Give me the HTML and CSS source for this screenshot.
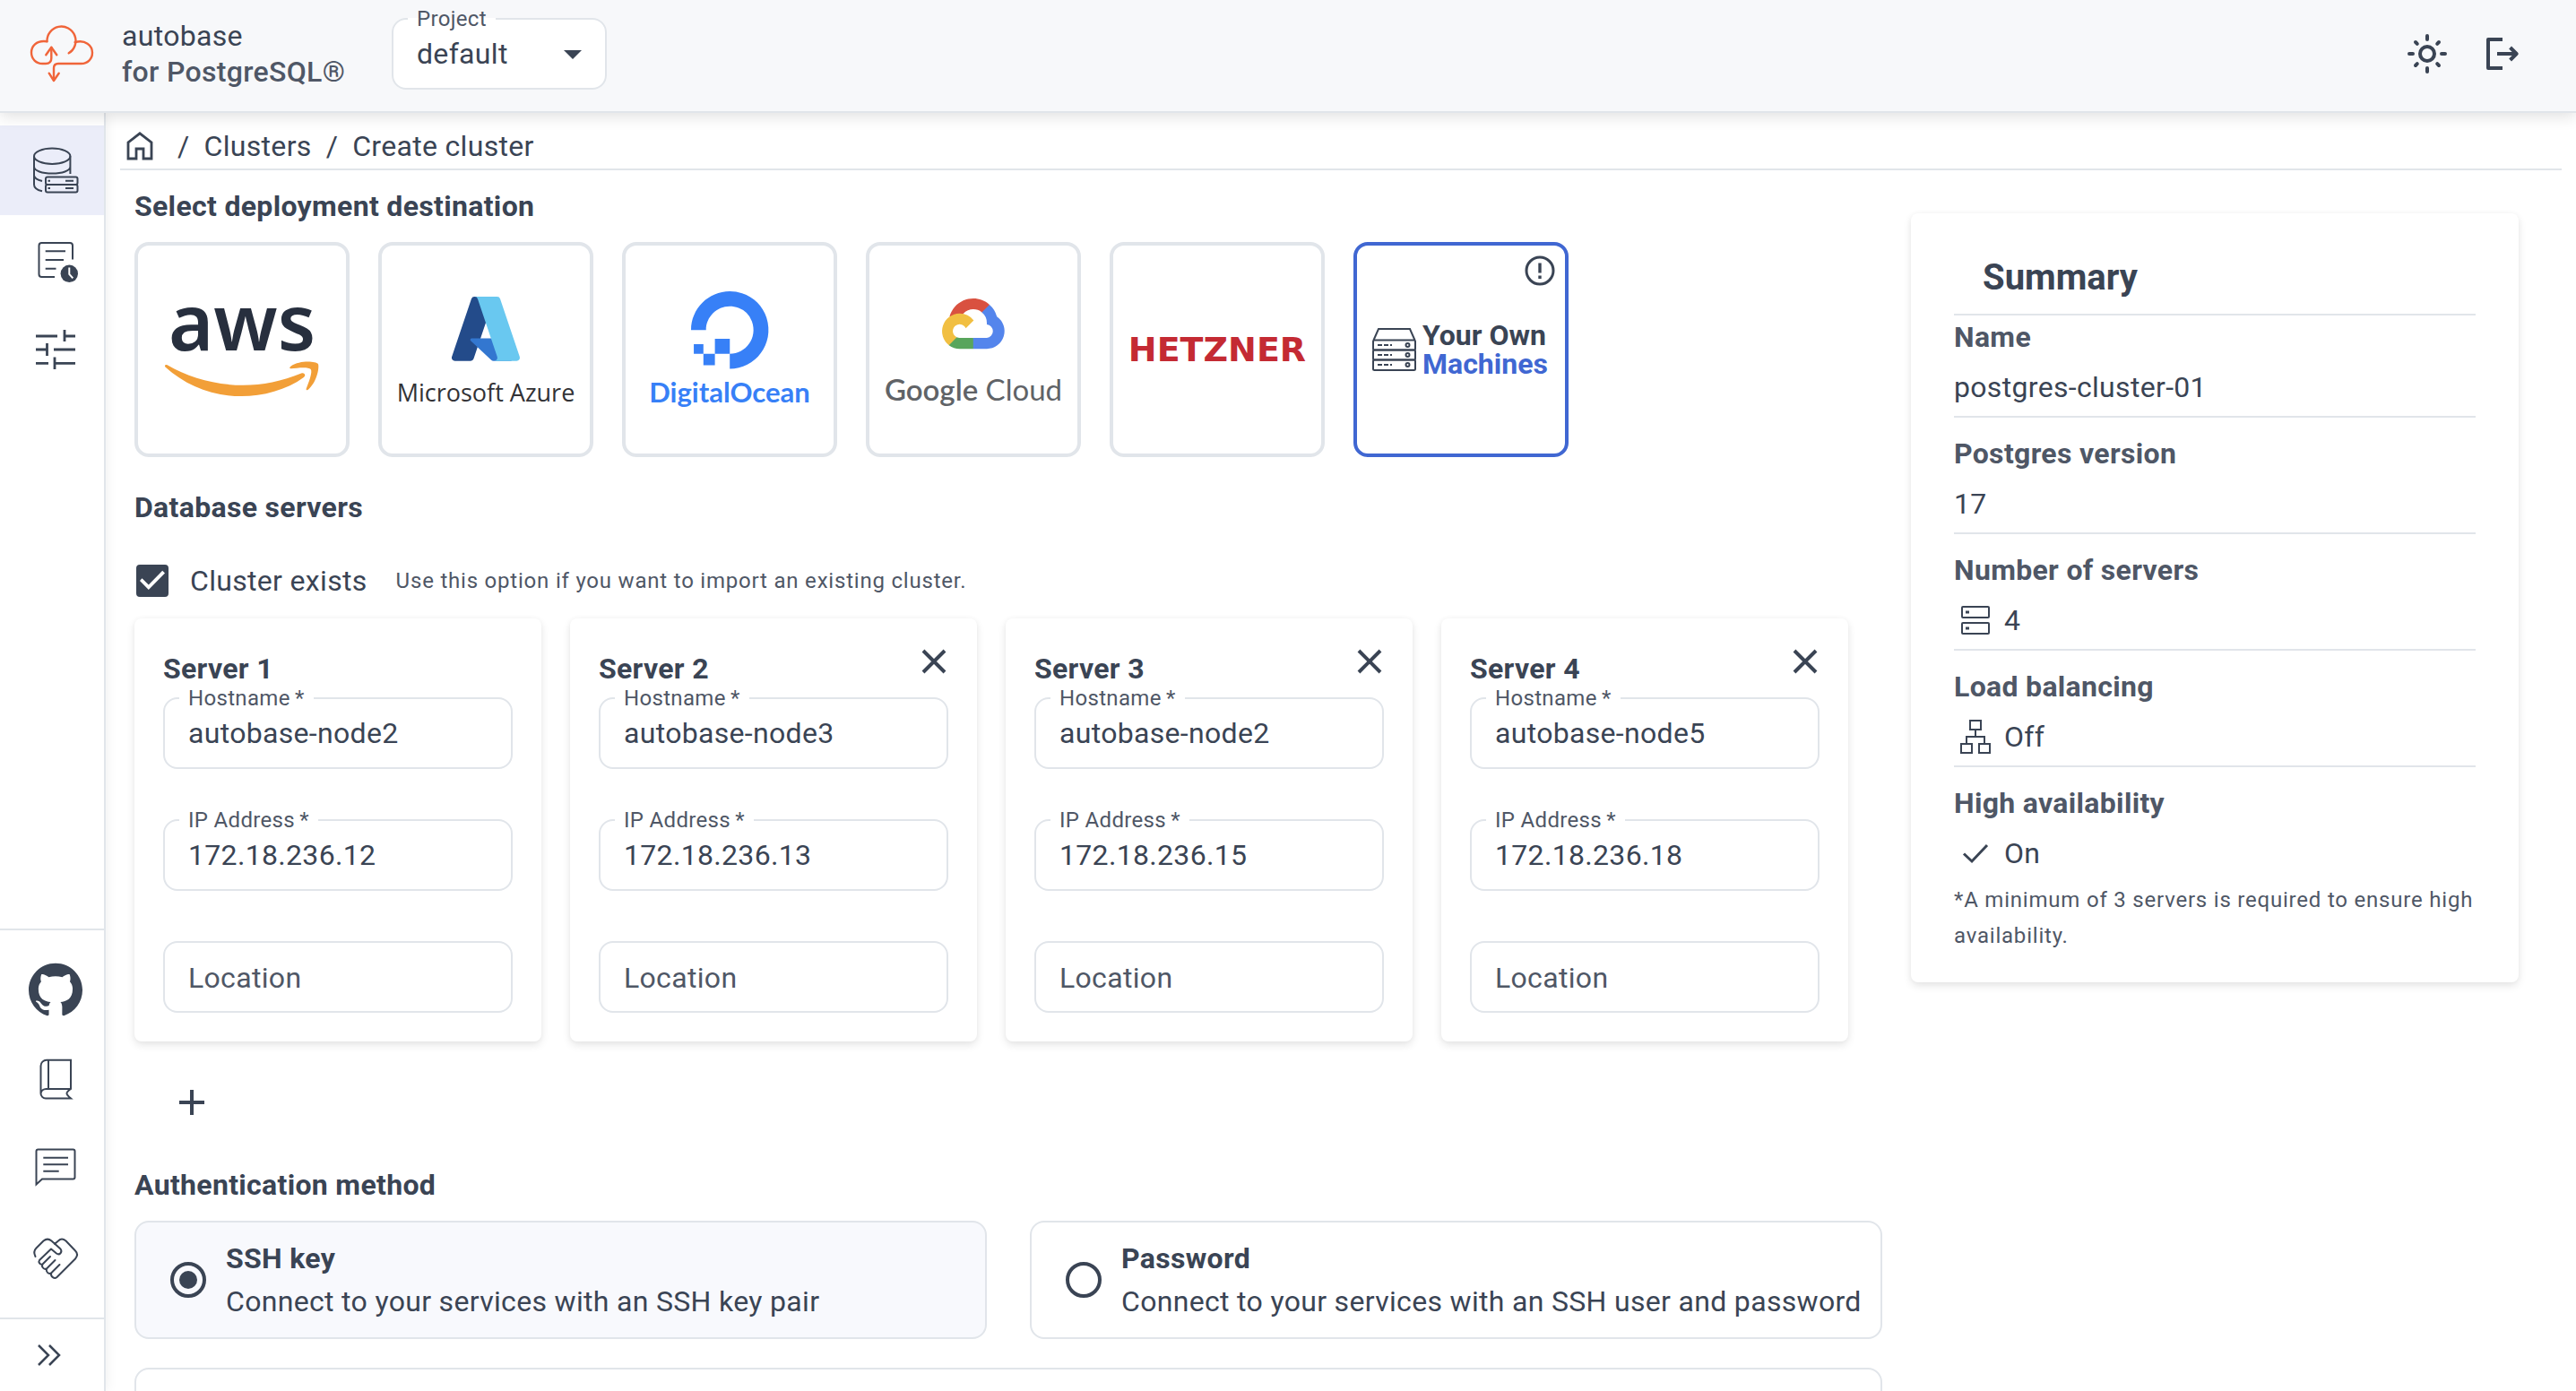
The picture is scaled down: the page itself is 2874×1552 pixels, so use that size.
FILE: index.html
```html
<!DOCTYPE html>
<html lang="en">
<head>
<meta charset="utf-8">
<meta name="viewport" content="width=device-width, initial-scale=1">
<title>Create cluster - autobase for PostgreSQL</title>
<link rel="stylesheet" href="styles.css">
</head>
<body>
<svg class="sprite" aria-hidden="true">
  <symbol id="icon-close" viewBox="0 0 28 28"><path d="M2 2l24 24M26 2L2 26" fill="none" stroke="currentColor" stroke-width="4"/></symbol>
</svg>

<header class="topbar">
  <a class="brand" href="#">
    <svg class="brand-mark" viewBox="0 0 80 72" fill="none" stroke="#f0653a" stroke-width="2.4" stroke-linecap="round" stroke-linejoin="round" aria-hidden="true">
      <path d="M22.5 22.2A16 16 0 1 1 46.7 35.3"/>
      <path d="M22.3 22.2C10 20.500 5 28 5 34.500C5 42 10.500 47 17.300 47H21C25 47 27.300 45 27.300 41V29"/>
      <path d="M21.300 37.300L27.300 28.700L33.300 37.300"/>
      <path d="M53.600 23.200C65 19.500 73 27 73 34.700C73 42 67.500 47 60.700 47H35C32 47 30 49 30 52V65.500"/>
      <path d="M24.700 57.700L30 66L35.700 57.700"/>
    </svg>
    <span class="brand-text"><span class="brand-name">autobase</span><span class="brand-sub">for PostgreSQL®</span></span>
  </a>
  <fieldset class="outlined project">
    <legend><label for="project">Project</label></legend>
    <select id="project" class="control"><option>default</option></select>
    <svg class="caret" viewBox="0 0 20 10" aria-hidden="true"><path d="M0 0h20L10 10z" fill="currentColor"/></svg>
  </fieldset>
  <div class="top-actions">
    <button class="icon-button" type="button" aria-label="Switch theme">
      <svg viewBox="0 0 24 24" fill="none" stroke="currentColor" stroke-width="2" stroke-linecap="round"><circle cx="12" cy="12" r="4"/><path d="M12 2v2M12 20v2M2 12h2M20 12h2M5.500 5.500l.9.9M17.600 17.600l.9.9M18.500 5.500l-.9.9M6.400 17.600l-.9.9"/></svg>
    </button>
    <button class="icon-button" type="button" aria-label="Log out">
      <svg viewBox="0 0 24 24" fill="none" stroke="currentColor" stroke-width="2" stroke-linejoin="round"><path d="M12 4H4v16h8M9 12h11M16.300 8.500L19.800 12l-3.500 3.500"/></svg>
    </button>
  </div>
</header>

<div class="shell">
  <nav class="sidebar" aria-label="Main">
    <div class="side-group side-main">
      <a class="side-item active" href="#" aria-label="Clusters">
        <svg viewBox="0 0 60 60" fill="none" stroke="currentColor" stroke-width="2"><ellipse cx="26.200" cy="14.300" rx="20.200" ry="8.700"/><path d="M6 14.300V46c0 3.500 3.500 6 9 7.300M46.400 14.300V34M6 26c0 4.500 9 7.500 20.200 7.500S46.400 30.500 46.400 26M6 36c.5 3 4 4.800 9 6"/><rect x="19" y="37.500" width="35.500" height="8.500" rx="2"/><rect x="19" y="46" width="35.500" height="8.500" rx="2"/><path d="M41 41.700h9M41 50h9M21.500 41.700h2.500M21.500 50h2.500"/></svg>
      </a>
      <a class="side-item" href="#" aria-label="Operations">
        <svg viewBox="0 0 60 60" fill="none" stroke="currentColor" stroke-width="2"><path d="M49 29.500V14a3 3 0 0 0-3-3H14.500a3 3 0 0 0-3 3v32a3 3 0 0 0 3 3H29M18.700 20.300H41M18.700 30H39M18.700 39.800H30.500"/><circle cx="45.300" cy="45.300" r="9.700" fill="currentColor" stroke="none"/><path d="M45.300 38.500v7.300l4 4.500" stroke="#fff"/></svg>
      </a>
      <a class="side-item" href="#" aria-label="Settings">
        <svg viewBox="0 0 60 60" fill="none" stroke="currentColor" stroke-width="2.800"><path d="M8 15h24M40 8v13M40 15h12M8 30h12M20.500 23v14M28 30h24M8 45.300h14M29 38.500v13.500M29 45.300h23"/></svg>
      </a>
    </div>
    <div class="side-group side-links">
      <a class="side-item" href="#" aria-label="GitHub">
        <svg viewBox="0 0 24 24" fill="currentColor"><path d="M12 .3c-6.630 0-12 5.370-12 12 0 5.300 3.438 9.800 8.205 11.385.6.113.82-.258.82-.577 0-.285-.01-1.040-.015-2.040-3.338.724-4.042-1.610-4.042-1.610C4.422 18.070 3.633 17.700 3.633 17.700c-1.087-.744.084-.729.084-.729 1.205.084 1.838 1.236 1.838 1.236 1.070 1.835 2.809 1.305 3.495.998.108-.776.417-1.305.76-1.605-2.665-.3-5.466-1.332-5.466-5.930 0-1.310.465-2.380 1.235-3.220-.135-.303-.54-1.523.105-3.176 0 0 1.005-.322 3.300 1.230.96-.267 1.980-.399 3-.405 1.020.006 2.040.138 3 .405 2.280-1.552 3.285-1.230 3.285-1.230.645 1.653.24 2.873.12 3.176.765.84 1.230 1.910 1.230 3.220 0 4.610-2.805 5.625-5.475 5.920.42.36.81 1.096.81 2.220 0 1.606-.015 2.896-.015 3.286 0 .315.21.69.825.57C20.565 22.092 24 17.592 24 12.300c0-6.630-5.370-12-12-12"/></svg>
      </a>
      <a class="side-item" href="#" aria-label="Documentation">
        <svg viewBox="0 0 60 60" fill="none" stroke="currentColor" stroke-width="2"><path d="M47 8.700H20a6.500 6.500 0 0 0-6.500 6.500V46a5.500 5.500 0 0 0 5.500 5.500H47c-3-2.500-4.500-3.800-4.500-5.500s1.500-3 4.500-5zM22 8.700V41M47 41H19.500a6 6 0 0 0-6 5"/></svg>
      </a>
      <a class="side-item" href="#" aria-label="Support">
        <svg viewBox="0 0 60 60" fill="none" stroke="currentColor" stroke-width="2"><path d="M8.500 47.500V10.500a2 2 0 0 1 2-2H49.500a2 2 0 0 1 2 2V39.500a2 2 0 0 1-2 2H15zM16.300 17.800H44M16.300 25.200H44M16.300 32.800H33.700"/></svg>
      </a>
      <a class="side-item" href="#" aria-label="Sponsor">
        <svg viewBox="0 0 60 60" fill="none" stroke="currentColor" stroke-width="2" stroke-linecap="round" stroke-linejoin="round"><path d="M7.500 28C5.500 24 6 21 8.500 18.500L16.500 10.500C19.500 8 22.500 8 25.500 10.500L35.500 19.500C38 23 34.500 27 31 24.500L25 19.500L12 32C10.500 34 12.500 37.500 15.500 36.500L24 28M15.500 36.500C14 39 16.500 43 20 41.500L29.500 32M20 41.500C19 45 22 48 25 46.500L34.500 37M25 46.500C24.500 50.500 28.500 53.500 31.500 51L52 30.500C54.500 27.500 54.500 24 52 21.500L41.500 10.500C38.500 8 35.500 8 33 10.500L29 14"/></svg>
      </a>
    </div>
    <button class="side-toggle" type="button" aria-label="Expand menu">
      <svg viewBox="0 0 48 48" fill="none" stroke="currentColor" stroke-width="2.500"><path d="M11 13l11 11-11 11M23 13l11 11-11 11"/></svg>
    </button>
  </nav>

  <main class="content">
    <nav class="crumbs" aria-label="Breadcrumb">
      <a class="crumb-home" href="#" aria-label="Home"><svg viewBox="0 0 32 32" fill="none" stroke="currentColor" stroke-width="2.800"><path d="M3 30V12L16 1.800L29 12V30H20V19H12V30z"/></svg></a>
      <span>/</span><a href="#">Clusters</a><span>/</span><span>Create cluster</span>
    </nav>

    <div class="columns">
      <form class="form">
        <h2 class="heading">Select deployment destination</h2>
        <div class="providers">
          <button class="provider" type="button" aria-label="AWS">
            <svg viewBox="0 0 240 240"><text x="120" y="121" text-anchor="middle" class="logo-aws">aws</text><g transform="translate(33 69) scale(.57)" fill="#f29f38"><path d="M273.500 143.700c-32.900 24.300-80.700 37.200-121.800 37.200-57.600 0-109.500-21.300-148.700-56.700-3.100-2.800-.3-6.600 3.400-4.400 42.400 24.600 94.700 39.500 148.800 39.500 36.500 0 76.600-7.600 113.500-23.200 5.500-2.500 10.200 3.600 4.800 7.600z"/><path d="M287.200 128.100c-4.200-5.400-27.800-2.600-38.500-1.300-3.200.4-3.700-2.400-.8-4.500 18.800-13.200 49.700-9.400 53.300-5 3.600 4.500-1 35.400-18.600 50.200-2.700 2.300-5.300 1.100-4.100-1.900 4-9.900 12.900-32.200 8.700-37.500z"/></g></svg>
          </button>
          <button class="provider" type="button" aria-label="Microsoft Azure">
            <svg viewBox="0 0 240 240"><g transform="translate(78.500 55.400) scale(.864)"><path fill="#234b8a" d="M33.338 6.544h26.038l-27.030 80.087a4.152 4.152 0 0 1-3.933 2.824H8.149a4.145 4.145 0 0 1-3.928-5.470L29.404 9.368a4.152 4.152 0 0 1 3.934-2.825z"/><path fill="#3377d0" d="M71.175 60.261h-41.290a1.911 1.911 0 0 0-1.305 3.309l26.532 24.764a4.171 4.171 0 0 0 2.846 1.121h23.380z"/><path fill="#69c8f0" d="M66.595 9.364a4.145 4.145 0 0 0-3.928-2.820H33.648a4.146 4.146 0 0 1 3.928 2.820l25.184 74.620a4.146 4.146 0 0 1-3.928 5.472h29.020a4.146 4.146 0 0 0 3.927-5.472z"/></g><text x="120" y="178" text-anchor="middle" class="logo-azure">Microsoft Azure</text></svg>
          </button>
          <button class="provider" type="button" aria-label="DigitalOcean">
            <svg viewBox="0 0 240 240" fill="#3780f7"><path transform="translate(77 55) scale(3.600)" d="M12.040 0C5.408-.02.005 5.370.005 11.992h4.638c0-4.923 4.882-8.731 10.064-6.855a6.950 6.950 0 014.147 4.148c1.889 5.177-1.924 10.055-6.840 10.064v-4.610H7.391v4.623h4.610V24c7.860 0 13.967-7.588 11.397-15.830-1.115-3.590-3.985-6.446-7.575-7.575A12.800 12.800 0 0012.039 0zM7.390 19.362H3.828v3.564H7.390zm-3.563 0v-2.978H.85v2.978z"/><text x="120" y="179" text-anchor="middle" class="logo-do">DigitalOcean</text></svg>
          </button>
          <button class="provider" type="button" aria-label="Google Cloud">
            <svg viewBox="0 0 240 240"><g transform="translate(85 63) scale(.273)"><path fill="#d95140" d="M170.250 56.820l22.250-22.250 1.490-9.370C153.440-11.680 88.980-7.500 52.420 33.920 42.270 45.420 34.730 59.760 30.720 74.570l7.970-1.120 44.500-7.340 3.440-3.510c19.800-21.750 53.270-24.670 76.130-6.170z"/><path fill="#5485ec" d="M224.200 73.920a97.500 97.500 0 0 0-30.210-48.720l-31.230 31.230a55.500 55.500 0 0 1 20.370 44.040v5.540a27.800 27.800 0 0 1 0 55.280h-55.670l-5.460 5.930v33.340l5.460 5.240h55.670a72.400 72.400 0 0 0 41.070-131.880"/><path fill="#58a55c" d="M71.870 205.800h55.590v-44.510H71.870a27.800 27.800 0 0 1-11.400-2.500l-7.890 2.420-22.400 22.250-1.960 7.580a72 72 0 0 0 43.650 14.760"/><path fill="#f1bf42" d="M71.870 61.430a72.400 72.400 0 0 0-43.650 129.610l32.250-32.250a27.800 27.800 0 1 1 36.780-36.770l32.240-32.250a72.400 72.400 0 0 0-57.620-28.340"/></g><text x="120" y="177" text-anchor="middle" class="logo-google"><tspan class="logo-google-bold">Google</tspan> Cloud</text></svg>
          </button>
          <button class="provider" type="button" aria-label="Hetzner">
            <svg viewBox="0 0 240 240"><text x="120" y="133" text-anchor="middle" class="logo-hetzner">HETZNER</text></svg>
          </button>
          <button class="provider selected" type="button" aria-label="Your Own Machines">
            <svg viewBox="0 0 240 240" fill="none" stroke="currentColor" stroke-width="2"><g><path d="M22.500 109.500L28 97H63L68.500 109.500"/><rect x="22" y="109.500" width="47" height="11" rx="1.500"/><rect x="22" y="120.500" width="47" height="11" rx="1.500"/><rect x="22" y="131.500" width="47" height="11.500" rx="1.500"/><path d="M27 115h5M34 115h5M41 115h2M27 126h5M34 126h5M41 126h2M27 137h5M34 137h5M41 137h2"/><circle cx="60.500" cy="115" r="2"/><circle cx="60.500" cy="126" r="2"/><circle cx="60.500" cy="137" r="2"/></g><circle cx="208" cy="32" r="15" stroke-width="3"/><path d="M208 23.500v11M208 37.500v3.500" stroke-width="3.400"/><g stroke="none" class="logo-own"><text x="77" y="115" fill="#3a4454">Your Own</text><text x="77" y="147" fill="#4067d2">Machines</text></g></svg>
          </button>
        </div>

        <h2 class="heading">Database servers</h2>
        <div class="exists">
          <label class="check-label"><input class="checkbox" type="checkbox" checked>Cluster exists</label>
          <span class="caption">Use this option if you want to import an existing cluster.</span>
        </div>

        <div class="servers">
          <section class="card server">
            <h3>Server 1</h3>
            <fieldset class="outlined"><legend><label for="host1">Hostname&thinsp;*</label></legend><input id="host1" class="control" value="autobase-node2"></fieldset>
            <fieldset class="outlined"><legend><label for="ip1">IP Address&thinsp;*</label></legend><input id="ip1" class="control" value="172.18.236.12"></fieldset>
            <input class="location" aria-label="Location" placeholder="Location">
          </section>
          <section class="card server">
            <h3>Server 2</h3>
            <button class="remove" type="button" aria-label="Remove server 2"><svg><use href="#icon-close"/></svg></button>
            <fieldset class="outlined"><legend><label for="host2">Hostname&thinsp;*</label></legend><input id="host2" class="control" value="autobase-node3"></fieldset>
            <fieldset class="outlined"><legend><label for="ip2">IP Address&thinsp;*</label></legend><input id="ip2" class="control" value="172.18.236.13"></fieldset>
            <input class="location" aria-label="Location" placeholder="Location">
          </section>
          <section class="card server">
            <h3>Server 3</h3>
            <button class="remove" type="button" aria-label="Remove server 3"><svg><use href="#icon-close"/></svg></button>
            <fieldset class="outlined"><legend><label for="host3">Hostname&thinsp;*</label></legend><input id="host3" class="control" value="autobase-node2"></fieldset>
            <fieldset class="outlined"><legend><label for="ip3">IP Address&thinsp;*</label></legend><input id="ip3" class="control" value="172.18.236.15"></fieldset>
            <input class="location" aria-label="Location" placeholder="Location">
          </section>
          <section class="card server">
            <h3>Server 4</h3>
            <button class="remove" type="button" aria-label="Remove server 4"><svg><use href="#icon-close"/></svg></button>
            <fieldset class="outlined"><legend><label for="host4">Hostname&thinsp;*</label></legend><input id="host4" class="control" value="autobase-node5"></fieldset>
            <fieldset class="outlined"><legend><label for="ip4">IP Address&thinsp;*</label></legend><input id="ip4" class="control" value="172.18.236.18"></fieldset>
            <input class="location" aria-label="Location" placeholder="Location">
          </section>
        </div>
        <button class="add" type="button" aria-label="Add server"><svg viewBox="0 0 28 28"><path d="M14 0v28M0 14h28" stroke="currentColor" stroke-width="4"/></svg></button>

        <h2 class="heading">Authentication method</h2>
        <div class="auth">
          <label class="auth-card chosen"><input class="radio" type="radio" name="auth" checked><span class="auth-text"><strong>SSH key</strong><span>Connect to your services with an SSH key pair</span></span></label>
          <label class="auth-card"><input class="radio" type="radio" name="auth"><span class="auth-text"><strong>Password</strong><span>Connect to your services with an SSH user and password</span></span></label>
        </div>
        <div class="key-panel"></div>
      </form>

      <aside class="card summary">
        <h2>Summary</h2>
        <dl>
          <div><dt>Name</dt><dd>postgres-cluster-01</dd></div>
          <div><dt>Postgres version</dt><dd>17</dd></div>
          <div><dt>Number of servers</dt><dd class="with-icon"><svg viewBox="0 0 40 40" fill="none" stroke="currentColor" stroke-width="2"><rect x="5" y="5" width="30" height="12" rx="1"/><rect x="5" y="23" width="30" height="12" rx="1"/><path d="M9 11h4M9 29h4" stroke-width="3"/></svg>4</dd></div>
          <div><dt>Load balancing</dt><dd class="with-icon"><svg viewBox="0 0 40 40" fill="none" stroke="currentColor" stroke-width="2"><rect x="14" y="2" width="12" height="10"/><rect x="4" y="28" width="12" height="10"/><rect x="24" y="28" width="12" height="10"/><path d="M20 12v8M10 28v-8h20v8"/></svg>Off</dd></div>
          <div><dt>High availability</dt><dd class="with-icon"><svg viewBox="0 0 40 40" fill="none" stroke="currentColor" stroke-width="3"><path d="M7 20.500l9 8.500L33 11"/></svg>On</dd></div>
        </dl>
        <p class="caption">*A minimum of 3 servers is required to ensure high availability.</p>
      </aside>
    </div>
  </main>
</div>
</body>
</html>
```
FILE: styles.css
```css
:root {
  --ink: #3a4454;
  --muted: #4f5766;
  --line: #e1e5ea;
  --blue: #4067d2;
}

* { box-sizing: border-box; }

body {
  margin: 0;
  height: 100vh;
  display: flex;
  flex-direction: column;
  overflow: hidden;
  background: #fff;
  color: var(--ink);
  font: 400 32px/48px Roboto, "Liberation Sans", sans-serif;
  letter-spacing: 0.01em;
}

h2, h3, p, dl, dd { margin: 0; }
a { color: inherit; text-decoration: none; }
svg { display: block; }
.sprite { position: absolute; width: 0; height: 0; }

button, input, select {
  font: inherit;
  color: inherit;
  letter-spacing: inherit;
  margin: 0;
}
button { border: 0; padding: 0; background: none; cursor: pointer; }

.card {
  background: #fff;
  border-radius: 8px;
  box-shadow: 0 4px 10px rgba(0, 0, 0, 0.1), 0 0 6px rgba(0, 0, 0, 0.03);
}

.caption {
  color: var(--muted);
  font-size: 24px;
  line-height: 40px;
  letter-spacing: 0.033em;
}

/* Top bar */
.topbar {
  display: flex;
  align-items: flex-end;
  padding: 8px 58px 24px 30px;
  background: #f7f8fa;
  border-bottom: 2px solid var(--line);
  box-shadow: 0 4px 16px rgba(0, 0, 0, 0.12);
  position: relative;
  z-index: 2;
}
.brand { display: flex; align-items: center; gap: 26px; width: 407px; }
.brand-mark { width: 80px; height: 72px; }
.brand-text { display: flex; flex-direction: column; line-height: 40px; white-space: nowrap; }
.brand-sub { color: var(--muted); font-weight: 500; }

.outlined {
  position: relative;
  min-width: 0;
  margin: 0;
  padding: 0 16px 12px;
  border: 2px solid var(--line);
  border-radius: 16px;
}
.outlined legend {
  padding: 0 10px;
  color: var(--muted);
  font-size: 24px;
  line-height: 26px;
}
.outlined label { display: block; }
.control {
  display: block;
  width: 100%;
  height: 52px;
  padding: 0 10px;
  border: 0;
  outline: 0;
  background: none;
  appearance: none;
}
.project { width: 240px; background: #fff; }
.caret { position: absolute; right: 26px; top: 22px; width: 20px; height: 10px; pointer-events: none; }

.top-actions { display: flex; gap: 36px; margin-left: auto; }
.icon-button { height: 80px; }
.icon-button svg { width: 48px; height: 48px; }

/* Shell */
.shell { flex: 1; min-height: 0; display: flex; }

.sidebar {
  flex: none;
  width: 118px;
  display: flex;
  flex-direction: column;
  border-right: 2px solid var(--line);
  box-shadow: 2px 0 12px rgba(0, 0, 0, 0.06);
}
.side-main { flex: 1; padding-top: 14px; }
.side-links { padding: 16px 0; border-top: 2px solid var(--line); }
.side-item { display: flex; align-items: center; height: 100px; padding-left: 32px; }
.side-item svg { width: 60px; height: 60px; }
.side-item.active { background: #ebedf9; }
.side-toggle { height: 82px; padding-left: 32px; border-top: 2px solid var(--line); }
.side-toggle svg { width: 48px; height: 48px; }

.content {
  flex: 1;
  min-width: 0;
  overflow: auto;
  scrollbar-width: none;
  padding: 0 16px;
}

.crumbs {
  display: flex;
  align-items: center;
  gap: 16px;
  height: 64px;
  padding: 12px 0 0 6px;
  border-bottom: 2px solid var(--line);
}
.crumb-home { width: 42px; }
.crumb-home svg { width: 32px; height: 32px; }

.columns {
  display: grid;
  grid-template-columns: minmax(0, 1fr) 678px;
  align-items: start;
  gap: 32px;
  padding: 16px 48px 32px 16px;
}

.heading { font-size: 32px; line-height: 48px; font-weight: 700; }

/* Providers */
.providers { display: flex; flex-wrap: wrap; gap: 32px; margin: 16px 0 32px; }
.provider {
  width: 240px;
  height: 240px;
  border: 4px solid var(--line);
  border-radius: 16px;
  background: #fff;
}
.provider svg { width: 240px; height: 240px; margin: -4px; letter-spacing: 0; }
.provider.selected { border-color: var(--blue); }
.logo-aws { font: 600 86px "Noto Sans", sans-serif; fill: #272f3e; }
.logo-azure { font: 400 27px "Open Sans", sans-serif; fill: #323236; }
.logo-do { font: 700 31px Lato, sans-serif; fill: #3780f7; }
.logo-google { font: 400 33px Lato, sans-serif; fill: #606367; }
.logo-google-bold { font-weight: 600; }
.logo-hetzner { font: 700 38px "DejaVu Sans", sans-serif; fill: #c42a33; }
.logo-own { font-size: 32px; font-weight: 700; }

/* Servers */
.exists { display: flex; align-items: center; gap: 32px; height: 84px; margin-top: 16px; padding-left: 2px; }
.check-label { display: flex; align-items: center; gap: 24px; }
.checkbox {
  appearance: none;
  width: 36px;
  height: 36px;
  border: 4px solid var(--ink);
  border-radius: 4px;
}
.checkbox:checked { background: var(--ink); }
.checkbox:checked::before {
  content: "";
  display: block;
  height: 28px;
  background: #fff;
  clip-path: polygon(0 50%, 9% 40%, 35% 66%, 90% 10%, 100% 20%, 35% 86%);
}

.servers { display: grid; grid-template-columns: repeat(4, 454px); gap: 32px; }
.server { position: relative; display: flex; flex-direction: column; padding: 32px; }
.server h3 { margin-bottom: -4px; font-size: 32px; line-height: 48px; font-weight: 700; }
.server .outlined + .outlined { margin-top: 44px; }
.remove { position: absolute; top: 34px; right: 34px; }
.remove svg { width: 28px; height: 28px; }
.location {
  width: 100%;
  height: 80px;
  margin-top: 56px;
  padding: 2px 26px 0;
  border: 2px solid var(--line);
  border-radius: 16px;
  background: none;
}
.location::placeholder { color: var(--muted); opacity: 1; }

.add { display: flex; align-items: center; justify-content: center; width: 128px; height: 72px; margin: 32px 0; }
.add svg { width: 28px; height: 28px; }

/* Authentication */
.auth { display: grid; grid-template-columns: 1fr 1fr; gap: 48px; margin: 16px 0 32px; }
.auth-card {
  display: flex;
  align-items: center;
  gap: 22px;
  padding: 16px 16px 16px 38px;
  border: 2px solid var(--line);
  border-radius: 16px;
}
.auth-card.chosen { background: #f8f9fd; }
.auth-text { display: flex; flex-direction: column; white-space: nowrap; }
.radio {
  appearance: none;
  flex: none;
  width: 40px;
  height: 40px;
  padding: 6px;
  border: 4px solid var(--ink);
  border-radius: 50%;
}
.radio:checked { background: var(--ink) content-box; }
.key-panel { height: 200px; border: 2px solid var(--line); border-radius: 16px; }

/* Summary */
.summary { margin-top: 32px; padding: 32px 48px; }
.summary h2 {
  padding: 0 32px;
  border-bottom: 2px solid var(--line);
  font-size: 40px;
  line-height: 80px;
  font-weight: 700;
  letter-spacing: 0;
}
.summary dl > div { padding: 16px 0 8px; border-bottom: 2px solid var(--line); }
.summary dl > div:first-child { padding-top: 0; }
.summary dl > div:last-child { border-bottom: 0; }
.summary dt { margin-bottom: 8px; color: var(--muted); font-weight: 700; }
.with-icon { display: flex; align-items: center; gap: 12px; padding-left: 4px; }
.with-icon svg { width: 40px; height: 40px; }
```
